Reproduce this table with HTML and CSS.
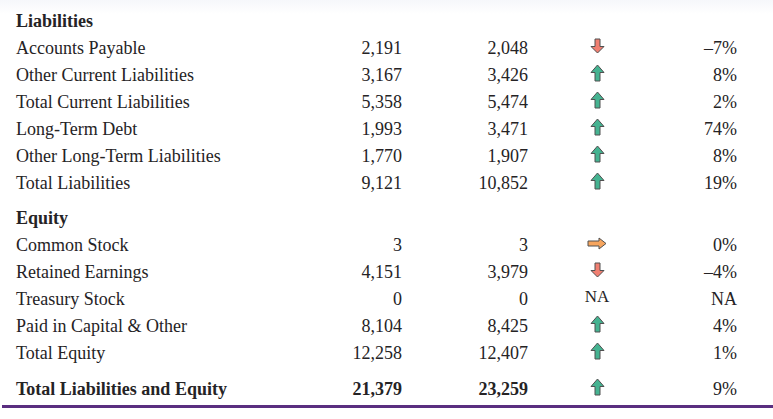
FILE: index.html
```html
<!DOCTYPE html>
<html>
<head>
<meta charset="utf-8">
<link rel="stylesheet" href="styles.css">
</head>
<body>
<div class="sheet">
  <div class="section">
    <div class="row head"><span class="label">Liabilities</span></div>
    <div class="row"><span class="label">Accounts Payable</span><span class="num">2,191</span><span class="num">2,048</span><span class="ind"><svg class="arr down" viewBox="0 0 15 16"><polygon points="7.5,15 14,8.5 10,8.5 10,1 5,1 5,8.5 1,8.5"/></svg></span><span class="pct">–7%</span></div>
    <div class="row"><span class="label">Other Current Liabilities</span><span class="num">3,167</span><span class="num">3,426</span><span class="ind"><svg class="arr up" viewBox="0 0 15 18"><polygon points="7.5,1 14,8.5 10,8.5 10,17 5,17 5,8.5 1,8.5"/></svg></span><span class="pct">8%</span></div>
    <div class="row"><span class="label">Total Current Liabilities</span><span class="num">5,358</span><span class="num">5,474</span><span class="ind"><svg class="arr up" viewBox="0 0 15 18"><polygon points="7.5,1 14,8.5 10,8.5 10,17 5,17 5,8.5 1,8.5"/></svg></span><span class="pct">2%</span></div>
    <div class="row"><span class="label">Long-Term Debt</span><span class="num">1,993</span><span class="num">3,471</span><span class="ind"><svg class="arr up" viewBox="0 0 15 18"><polygon points="7.5,1 14,8.5 10,8.5 10,17 5,17 5,8.5 1,8.5"/></svg></span><span class="pct">74%</span></div>
    <div class="row"><span class="label">Other Long-Term Liabilities</span><span class="num">1,770</span><span class="num">1,907</span><span class="ind"><svg class="arr up" viewBox="0 0 15 18"><polygon points="7.5,1 14,8.5 10,8.5 10,17 5,17 5,8.5 1,8.5"/></svg></span><span class="pct">8%</span></div>
    <div class="row"><span class="label">Total Liabilities</span><span class="num">9,121</span><span class="num">10,852</span><span class="ind"><svg class="arr up" viewBox="0 0 15 18"><polygon points="7.5,1 14,8.5 10,8.5 10,17 5,17 5,8.5 1,8.5"/></svg></span><span class="pct">19%</span></div>
  </div>
  <div class="section equity">
    <div class="row head"><span class="label">Equity</span></div>
    <div class="row"><span class="label">Common Stock</span><span class="num">3</span><span class="num">3</span><span class="ind"><svg class="arr right" viewBox="0 0 20 13"><polygon points="19,6.5 12,1 12,4 1,4 1,9 12,9 12,12"/></svg></span><span class="pct">0%</span></div>
    <div class="row"><span class="label">Retained Earnings</span><span class="num">4,151</span><span class="num">3,979</span><span class="ind"><svg class="arr down" viewBox="0 0 15 16"><polygon points="7.5,15 14,8.5 10,8.5 10,1 5,1 5,8.5 1,8.5"/></svg></span><span class="pct">–4%</span></div>
    <div class="row"><span class="label">Treasury Stock</span><span class="num">0</span><span class="num">0</span><span class="ind na">NA</span><span class="pct">NA</span></div>
    <div class="row"><span class="label">Paid in Capital &amp; Other</span><span class="num">8,104</span><span class="num">8,425</span><span class="ind"><svg class="arr up" viewBox="0 0 15 18"><polygon points="7.5,1 14,8.5 10,8.5 10,17 5,17 5,8.5 1,8.5"/></svg></span><span class="pct">4%</span></div>
    <div class="row"><span class="label">Total Equity</span><span class="num">12,258</span><span class="num">12,407</span><span class="ind"><svg class="arr up" viewBox="0 0 15 18"><polygon points="7.5,1 14,8.5 10,8.5 10,17 5,17 5,8.5 1,8.5"/></svg></span><span class="pct">1%</span></div>
  </div>
  <div class="section total">
    <div class="row grand"><span class="label">Total Liabilities and Equity</span><span class="num">21,379</span><span class="num">23,259</span><span class="ind"><svg class="arr up" viewBox="0 0 15 18"><polygon points="7.5,1 14,8.5 10,8.5 10,17 5,17 5,8.5 1,8.5"/></svg></span><span class="pct">9%</span></div>
  </div>
</div>
</body>
</html>
```

FILE: styles.css
```css
html, body {
  margin: 0;
  padding: 0;
  background: #ffffff;
}
body {
  background: linear-gradient(to bottom, #f6f7fb 0px, #ffffff 14px);
  font-family: "Liberation Serif", "Times New Roman", serif;
  font-size: 18px;
  color: #252325;
}
.sheet {
  margin-left: 2px;
  padding-top: 8px;
  padding-bottom: 2px;
  border-bottom: 3px solid #5a2e80;
  box-shadow: 0 1px 0 #c9b6d8;
}
.section.equity {
  margin-top: 8px;
}
.section.total {
  margin-top: 9px;
}
.row {
  display: grid;
  grid-template-columns: 300px 86px 126px 138px 71px;
  height: 27px;
  line-height: 27px;
  padding-left: 14px;
  align-items: center;
}
.head .label,
.grand .label,
.grand .num {
  font-weight: bold;
}
.label {
  white-space: nowrap;
}
.num,
.pct {
  text-align: right;
}
.ind {
  display: flex;
  justify-content: center;
  align-items: center;
  height: 27px;
  padding-bottom: 5px;
  box-sizing: border-box;
}
.ind.na {
  font-size: 17px;
  line-height: 20px;
  padding-bottom: 6px;
}
.arr {
  width: 15px;
  height: 18px;
  display: block;
  flex: none;
}
.arr.down {
  height: 16px;
}
.arr.right {
  width: 20px;
  height: 13px;
}
.arr polygon {
  stroke: #505050;
  stroke-width: 1;
  stroke-linejoin: miter;
}
.arr.up polygon {
  fill: #45b391;
}
.arr.down polygon {
  fill: #f07f71;
}
.arr.right polygon {
  fill: #f6a55e;
}
```
